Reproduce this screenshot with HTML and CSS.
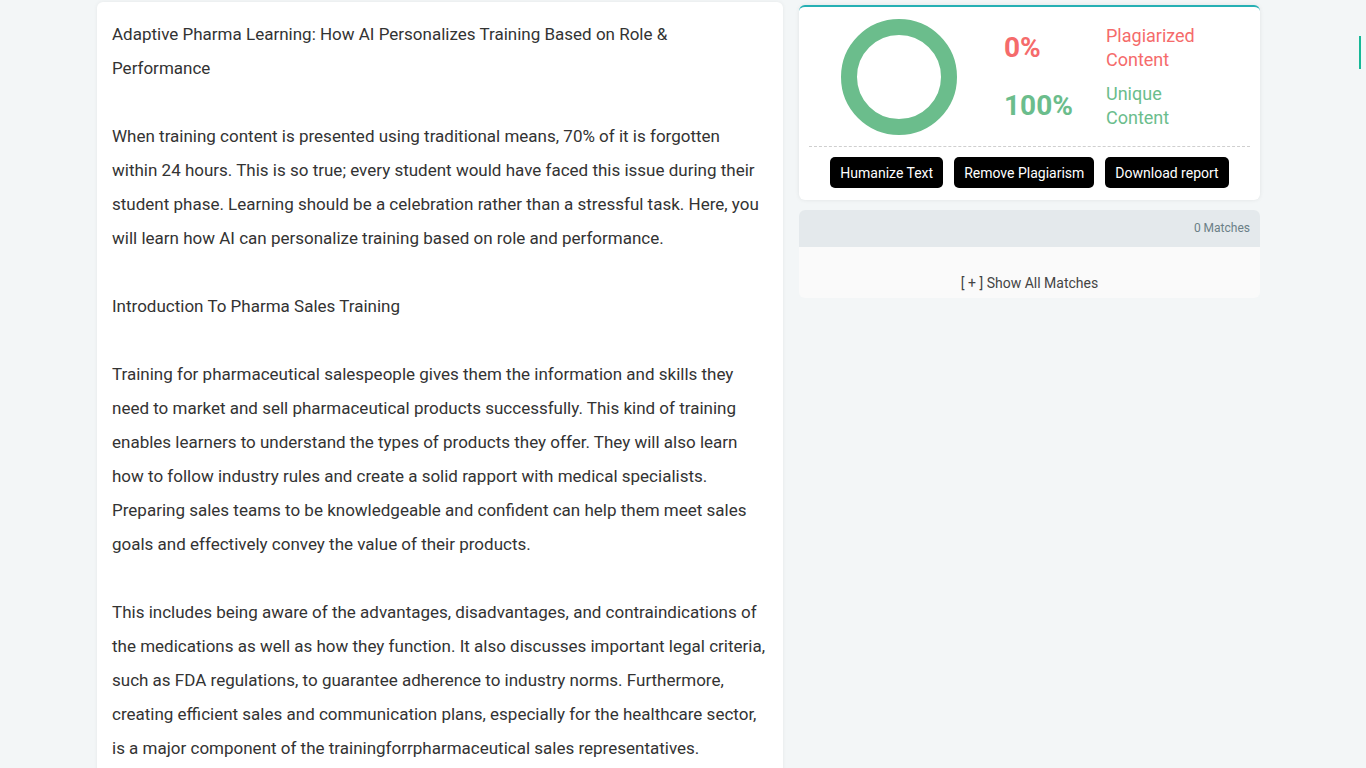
FILE: index.html
```html
<!DOCTYPE html>
<html lang="en">
<head>
<meta charset="utf-8">
<title>Plagiarism Report</title>
<link rel="stylesheet" href="styles.css">
</head>
<body>
<div class="page">
  <main class="doc-card">
    <p>Adaptive Pharma Learning: How AI Personalizes Training Based on Role &amp; Performance</p>
    <p>When training content is presented using traditional means, 70% of it is forgotten within 24 hours. This is so true; every student would have faced this issue during their student phase. Learning should be a celebration rather than a stressful task. Here, you will learn how AI can personalize training based on role and performance.</p>
    <p>Introduction To Pharma Sales Training</p>
    <p>Training for pharmaceutical salespeople gives them the information and skills they need to market and sell pharmaceutical products successfully. This kind of training enables learners to understand the types of products they offer. They will also learn how to follow industry rules and create a solid rapport with medical specialists. Preparing sales teams to be knowledgeable and confident can help them meet sales goals and effectively convey the value of their products.</p>
    <p>This includes being aware of the advantages, disadvantages, and contraindications of the medications as well as how they function. It also discusses important legal criteria, such as FDA regulations, to guarantee adherence to industry norms. Furthermore, creating efficient sales and communication plans, especially for the healthcare sector, is a major component of the trainingforrpharmaceutical sales representatives.</p>
  </main>
  <aside class="side">
    <section class="result-card">
      <div class="result-top">
        <div class="chart">
          <svg width="116" height="116" viewBox="0 0 116 116">
            <circle cx="58" cy="58" r="50" fill="none" stroke="#6bbd8c" stroke-width="16"/>
          </svg>
        </div>
        <div class="stats">
          <div class="stat red">
            <span class="pct">0%</span>
            <span class="label">Plagiarized<br>Content</span>
          </div>
          <div class="stat green">
            <span class="pct">100%</span>
            <span class="label">Unique<br>Content</span>
          </div>
        </div>
      </div>
      <div class="actions">
        <button class="btn">Humanize Text</button>
        <button class="btn">Remove Plagiarism</button>
        <button class="btn">Download report</button>
      </div>
    </section>
    <section class="matches-card">
      <div class="matches-head">0 Matches</div>
      <div class="matches-body">[ + ] Show All Matches</div>
    </section>
  </aside>
</div>
<div class="side-tab"></div>
</body>
</html>
```
FILE: styles.css
```css
html, body {
  margin: 0;
  padding: 0;
  height: 100%;
  overflow: hidden;
}
body {
  background: #f3f6f7;
  font-family: Roboto, "Liberation Sans", sans-serif;
  color: #333;
}
.page {
  display: flex;
  align-items: flex-start;
  gap: 16px;
  padding: 2px 0 0 97px;
}
.doc-card {
  width: 656px;
  flex: none;
  background: #fff;
  border-radius: 6px;
  box-shadow: 0 0 4px rgba(0, 0, 0, 0.06);
  padding: 15px 15px 40px;
  font-size: 17px;
  line-height: 34px;
  color: #333;
}
.doc-card p {
  margin: 0 0 34px;
}
.side {
  width: 461px;
  flex: none;
  margin-top: 3px;
  display: flex;
  flex-direction: column;
  gap: 10px;
}
.result-card {
  background: #fff;
  border-top: 2px solid #26b0b4;
  border-radius: 6px;
  box-shadow: 0 0 4px rgba(0, 0, 0, 0.08);
  padding: 11px 10px 12px;
}
.result-top {
  display: flex;
  align-items: center;
  height: 118px;
}
.chart {
  width: 180px;
  display: flex;
  justify-content: center;
}
.chart svg {
  display: block;
}
.stats {
  display: flex;
  flex-direction: column;
  gap: 10px;
  padding-left: 15px;
  margin-top: -1px;
}
.stat {
  display: flex;
  align-items: center;
  height: 48px;
}
.pct {
  width: 102px;
  font-size: 28px;
  font-weight: 700;
}
.label {
  font-size: 18px;
  line-height: 24px;
}
.red { color: #f56b6b; }
.green { color: #6bbd8c; }
.actions {
  margin-top: 10px;
  border-top: 1px dashed #cfcfcf;
  padding-top: 10px;
  display: flex;
  justify-content: center;
  gap: 11px;
}
.btn {
  background: #000;
  color: #fff;
  border: none;
  border-radius: 5px;
  height: 31px;
  padding: 0 10px;
  font-family: Roboto, "Liberation Sans", sans-serif;
  font-size: 14px;
  cursor: pointer;
}
.matches-card {
  border-radius: 6px;
  overflow: hidden;
  background: #fafafa;
}
.matches-head {
  background: #e4e9ec;
  height: 37px;
  line-height: 37px;
  text-align: right;
  padding-right: 10px;
  font-size: 12px;
  color: #6b7f87;
}
.matches-body {
  height: 51px;
  box-sizing: border-box;
  padding-top: 27px;
  text-align: center;
  font-size: 14px;
  line-height: 18px;
  color: #444;
}
.side-tab {
  position: absolute;
  left: 1359px;
  top: 36px;
  width: 2px;
  height: 33px;
  background: #17b897;
}
```
